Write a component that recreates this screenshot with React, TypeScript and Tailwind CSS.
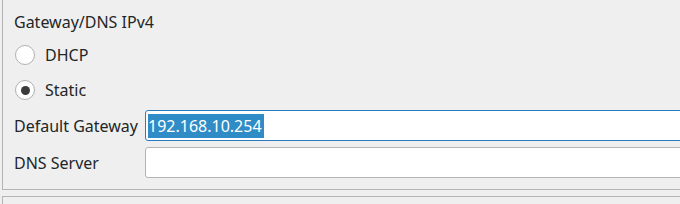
function Radio({ label, checked }: { label: string; checked?: boolean }) {
  return (
    <div className="flex items-center h-[22px]">
      <span className="ml-[1px] w-[20px] h-[20px] rounded-full border border-[#b0b0b0] bg-white flex items-center justify-center">
        {checked && <span className="w-[9px] h-[9px] rounded-full bg-[#3b3b3b]" />}
      </span>
      <span className="ml-[10px] leading-[22px]">{label}</span>
    </div>
  )
}

export default function App() {
  return (
    <div
      className="w-[680px] h-[204px] bg-[#efefef] overflow-hidden text-[16px] text-[#232627]"
      style={{ fontFamily: '"Noto Sans", "DejaVu Sans", sans-serif' }}
    >
      <div className="ml-[2px] h-[190px] border-l border-b border-[#b4b4b4] pl-[11px]">
        <div className="pt-[11px] h-[33px] leading-[22px]">Gateway/DNS IPv4</div>
        <div className="mt-[11px]">
          <Radio label="DHCP" />
        </div>
        <div className="mt-[13px]">
          <Radio label="Static" checked />
        </div>
        <div className="mt-[9px] flex items-center h-[31px]">
          <span className="w-[131px] leading-[22px]">Default Gateway</span>
          <div className="flex-1 h-[31px] -mr-[4px] border border-[#2b7bc0] rounded-[3px] bg-white flex items-center pl-[2px]">
            <span className="bg-[#308cc6] text-white leading-[24px] h-[24px] pr-[1px] border-r border-[#c0602a]">
              192.168.10.254
            </span>
          </div>
        </div>
        <div className="mt-[6px] flex items-center h-[31px]">
          <span className="w-[131px] leading-[22px]">DNS Server</span>
          <div className="flex-1 h-[31px] -mr-[4px] border border-[#b4b4b4] rounded-[3px] bg-white" />
        </div>
      </div>
      <div className="mt-[6px] ml-[2px] h-[20px] border-l border-t border-[#b4b4b4]" />
    </div>
  )
}
